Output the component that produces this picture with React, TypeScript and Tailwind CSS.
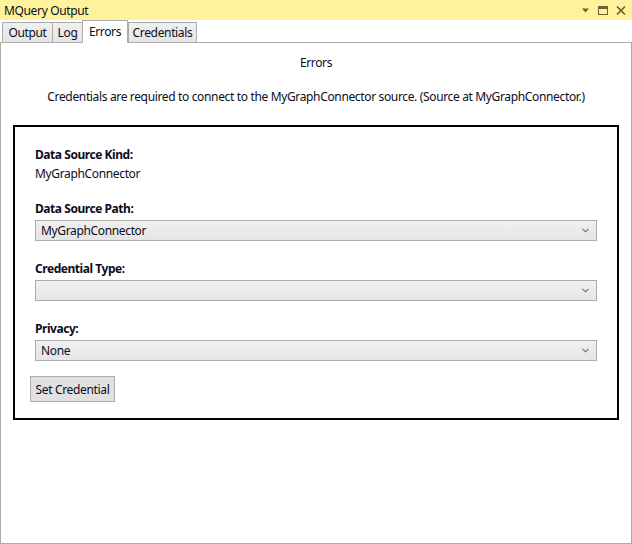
import React from "react";

const tabs = [
  { label: "Output", w: "w-[50px]" },
  { label: "Log", w: "w-[30px]" },
  { label: "Errors", w: "w-[46px]", active: true },
  { label: "Credentials", w: "w-[69px]", last: true },
];

function Chevron() {
  return (
    <svg width="7" height="5" viewBox="0 0 7 5" className="shrink-0">
      <path d="M0.5 0.8 L3.5 3.8 L6.5 0.8" fill="none" stroke="#6d6d6d" strokeWidth="1.1" />
    </svg>
  );
}

function Combo({ value }: { value?: string }) {
  return (
    <div className="flex h-[21px] items-center justify-between border border-[#acacac] bg-gradient-to-b from-[#f0f0f0] to-[#e5e5e5] pl-[5px] pr-[7px]">
      <span className="pt-[1px] leading-[16px]">{value ?? ""}</span>
      <Chevron />
    </div>
  );
}

function Field({ label, value, first }: { label: string; value?: string; first?: boolean }) {
  return (
    <div className={`${first ? "mt-[18px]" : "mt-[19px]"} flex flex-col`}>
      <div className="h-[17px] pt-[1px] font-bold leading-[16px] tracking-[-0.45px]">{label}</div>
      <div className="mt-[3px]">
        <Combo value={value} />
      </div>
    </div>
  );
}

export default function App() {
  return (
    <div className="flex h-screen w-full flex-col bg-white font-['Segoe_UI','Noto_Sans',sans-serif] text-[12px] tracking-[-0.35px] text-[#0c0c20]">
      {/* Title bar */}
      <div className="flex h-[20px] shrink-0 items-center justify-between bg-[#fff29d] pl-[4px] pr-[6px]">
        <span className="pt-[1px] leading-[16px]">MQuery Output</span>
        <div className="flex items-center gap-[8px]">
          <svg width="8" height="5" viewBox="0 0 8 5">
            <path d="M0 0.5 H7 L3.5 4.5 Z" fill="#6f6030" />
          </svg>
          <svg width="10" height="9" viewBox="0 0 10 9">
            <rect x="0.5" y="0.5" width="9" height="8" fill="none" stroke="#6f6030" />
            <rect x="0" y="0" width="10" height="3" fill="#6f6030" />
          </svg>
          <svg width="10" height="9" viewBox="0 0 10 9">
            <path d="M1 0.5 L9 8.5 M9 0.5 L1 8.5" stroke="#6f6030" strokeWidth="1.6" />
          </svg>
        </div>
      </div>

      {/* Tab strip */}
      <div className="relative z-10 flex h-[22px] shrink-0 items-end pl-[2px]">
        {tabs.map((t) =>
          t.active ? (
            <div
              key={t.label}
              className={`${t.w} -mb-[1px] flex h-[23px] items-center justify-center border-l border-t border-r border-[#acacac] bg-white pb-[1px]`}
            >
              <span className="leading-[16px]">{t.label}</span>
            </div>
          ) : (
            <div
              key={t.label}
              className={`${t.w} flex h-[20px] items-center justify-center border-l border-t border-[#acacac] bg-gradient-to-b from-[#f0f0f0] to-[#e5e5e5] pt-[1px] ${t.last ? "border-r" : ""}`}
            >
              <span className="leading-[16px]">{t.label}</span>
            </div>
          )
        )}
      </div>

      {/* Panel */}
      <div className="flex flex-1 flex-col border border-[#acacac] pt-[12px]">
        <div className="text-center leading-[16px]">Errors</div>
        <div className="mt-[18px] text-center leading-[16px]">
          Credentials are required to connect to the MyGraphConnector source. (Source at MyGraphConnector.)
        </div>

        <div className="mx-[12px] mt-[20px] flex h-[295px] flex-col border-2 border-black px-[20px] pt-[20px]">
          <div className="font-bold leading-[16px] tracking-[-0.45px]">Data Source Kind:</div>
          <div className="mt-[3px] leading-[16px]">MyGraphConnector</div>

          <Field first label="Data Source Path:" value="MyGraphConnector" />
          <Field label="Credential Type:" />
          <Field label="Privacy:" value="None" />

          <div className="mt-[15px] -ml-[5px]">
            <button className="flex h-[26px] w-[85px] items-center justify-center border border-[#adadad] bg-[#e1e1e1] pt-[1px] leading-[16px]">
              Set Credential
            </button>
          </div>
        </div>
      </div>
    </div>
  );
}
